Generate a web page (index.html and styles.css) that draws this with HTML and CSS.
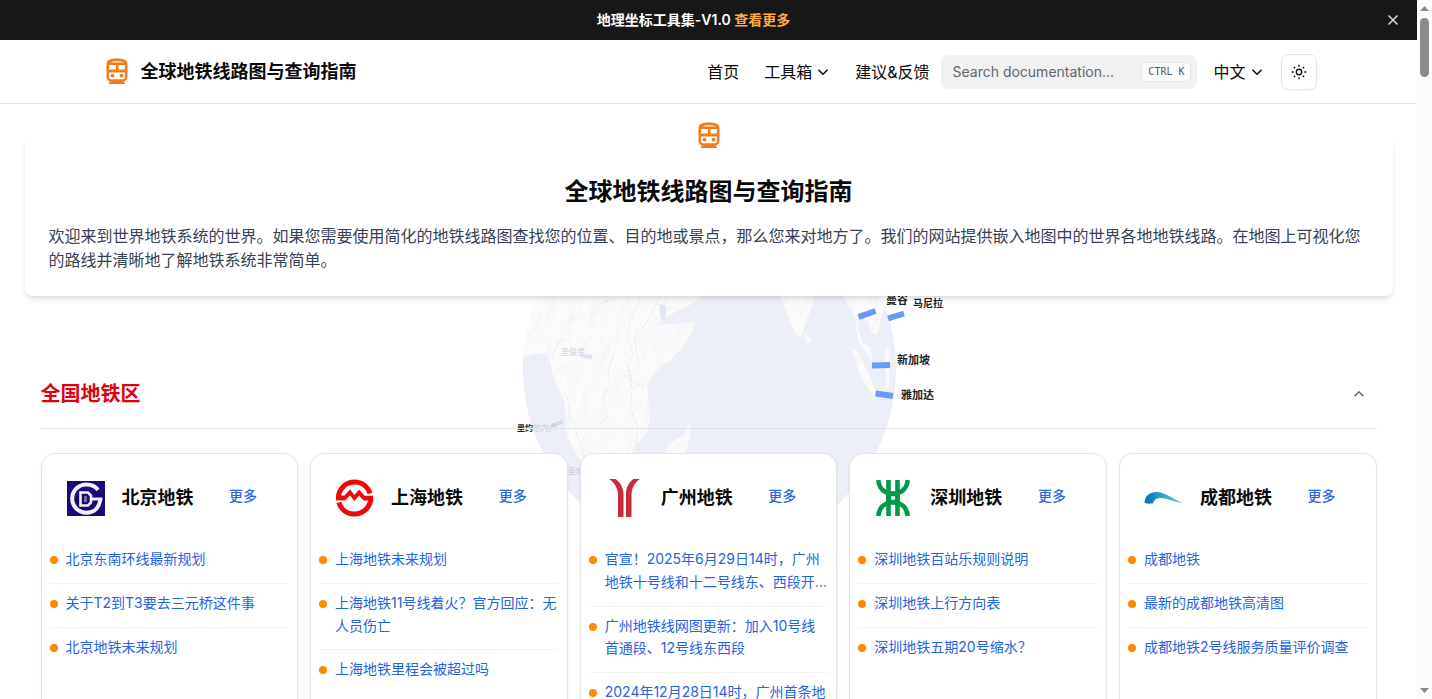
FILE: index.html
```html
<!DOCTYPE html>
<html lang="zh-CN">
<head>
<meta charset="utf-8">
<meta name="viewport" content="width=device-width, initial-scale=1">
<title>全球地铁线路图与查询指南</title>
<link rel="stylesheet" href="styles.css">
</head>
<body>
<svg class="defs" width="0" height="0" aria-hidden="true">
  <defs>
    <symbol id="subway" viewBox="0 0 32 32">
      <path fill="#f27a1e" fill-rule="evenodd" d="M5.500 8C5.500 4 9.500 2.500 16 2.500S26.500 4 26.500 8V20.500c0 2.800-1.700 4.700-4 5.200l1.500 1v1.300h-16V26.700l1.500-1c-2.300-.5-4-2.400-4-5.200zM8 9v4.600h7V9zm9.500 0v4.600H24V9zM8 16.500v4.200c0 1.700 1 2.600 2.700 2.600h10.600c1.700 0 2.700-.9 2.700-2.600V16.500z"/>
      <path fill="#ffd9b0" d="M9.500 6.700C10.500 5.500 12.500 5 16 5s5.500.5 6.500 1.700z"/>
      <circle cx="11.500" cy="19.700" r="1.900" fill="#f27a1e"/><circle cx="20.500" cy="19.700" r="1.900" fill="#f27a1e"/>
    </symbol>
    <symbol id="chevron" viewBox="0 0 14 14"><path d="M2.500 4.700 7 9.200l4.500-4.500" fill="none" stroke="currentColor" stroke-width="1.500"/></symbol>
  </defs>
</svg>
<div class="shell">
<div class="page">
  <div class="banner">
    <p class="banner-text">地理坐标工具集-V1.0 <a href="#tools">查看更多</a></p>
    <button class="banner-close" type="button" aria-label="关闭"><svg width="12" height="12" viewBox="0 0 12 12"><path d="M1.500 1.500l9 9m0-9l-9 9" stroke="currentColor" stroke-width="1.600"/></svg></button>
  </div>
  <header class="header">
    <div class="header-inner">
      <a class="brand" href="#home"><svg class="subway"><use href="#subway"/></svg><span>全球地铁线路图与查询指南</span></a>
      <nav class="nav">
        <a href="#home">首页</a>
        <button class="menu" type="button">工具箱<svg class="chevron"><use href="#chevron"/></svg></button>
        <a href="#feedback">建议&amp;反馈</a>
      </nav>
      <label class="search"><input type="search" aria-label="Search documentation" placeholder="Search documentation..."><kbd>CTRL K</kbd></label>
      <button class="menu lang" type="button">中文<svg class="chevron"><use href="#chevron"/></svg></button>
      <button class="theme" type="button" aria-label="主题"><svg width="16" height="16" viewBox="0 0 16 16" fill="none" stroke="currentColor" stroke-width="1.400"><circle cx="8" cy="8" r="2.700"/><path d="M8 .7v2M8 13.300v2M.7 8h2M13.300 8h2M2.900 2.900l1.300 1.300M11.800 11.800l1.300 1.300M2.900 13.100l1.300-1.300M11.800 4.200l1.300-1.300"/></svg></button>
    </div>
  </header>
  <main class="main">
    <svg class="globe" width="480" height="400" viewBox="468 160 480 400" aria-hidden="true">
      <defs>
        <clipPath id="ball"><circle cx="708.500" cy="369" r="186.500"/></clipPath>
        <filter id="relief" x="0" y="0" width="100%" height="100%">
          <feTurbulence type="fractalNoise" baseFrequency=".07 .05" numOctaves="4" seed="8"/>
          <feDiffuseLighting surfaceScale="2.200" lighting-color="#fff" result="light"><feDistantLight azimuth="225" elevation="62"/></feDiffuseLighting>
          <feColorMatrix type="matrix" values=".2 0 0 0 .78  .2 0 0 0 .78  .2 0 0 0 .79  0 0 0 1 0"/>
          <feComposite in2="SourceGraphic" operator="in"/>
        </filter>
        <linearGradient id="fade" x1="0" y1="0" x2="1" y2="1"><stop offset=".8" stop-color="#fff" stop-opacity="0"/><stop offset=".88" stop-color="#fff"/></linearGradient>
      </defs>
      <g clip-path="url(#ball)">
        <rect x="520" y="180" width="376" height="380" fill="#eceff7"/>
        <g fill="#f8f9fb" filter="url(#relief)">
          <path d="M520 180h170l10 116-9 8-27 13-8 8 38-3c-3 14-12 26-24 37-10 8-19 16-24 28l3 30-2 14-12 14-10 20-32 14-20-28c-4-11-8-15-8-25l-1-23c-5-14-13-24-14-38l-3-9-10-3-15 4z"/>
          <path d="M688 423l-5 13-9 4-8 6-4 16 6 16h8l6-18 7-22 1-9z"/>
          <path d="M776 290l6 13 8 22 6 10 4 2 6-18 5-13 4-16zM803 334l8 5-1 5-5-1zM838 290h40l6 14-8 30-5-1-5-12-9-8v18l5 12 8 5 1 14-8-12-6-9-3-24-9-16zM850 348l8 5 9 20 10 22-3 3-13-18zM884 348h5l-1 38-3 2z"/>
        </g>
        <g fill="none" stroke="#c6ccd6" stroke-width="1" opacity=".4">
          <path stroke-dasharray="3 1.500" d="M645 285l-8 18-8 16-2 17 5 18-5 14 4 13 11 6M613 354l-6 17 2 13-7 16 4 16-11 14M628 370l3 19-2 20 8 18-2 15 6 14M660 295l-14 27-13 14 4 24M551 357l5-12 8-6M566 397l3 20 9 22 5 16 18 9M592 315l9-12 13-5"/>
        </g>
        <path d="M658 304l7 2-1 15-4-2z" fill="#e0e6f2"/>
        <rect x="708" y="369" width="190" height="190" fill="url(#fade)"/>
      </g>
      <g stroke="#6c98fb" stroke-width="6">
        <path d="M857.500 317l17-6M887 318.500l16-5M871 365.500l18-.5M874.500 393.500l17.500 2.500"/>
        <path d="M580 355.500l11 1.500M550 426l12-4.500" opacity=".22" stroke-width="4"/>
      </g>
      <g class="city">
        <text x="885" y="304">曼谷</text><text x="912" y="307" class="mid">马尼拉</text><text x="896" y="364">新加坡</text><text x="900" y="399">雅加达</text>
        <text x="516" y="431" class="tiny">里约</text><text x="532" y="431" class="tiny faint">热内卢</text><text x="560" y="355" class="tiny faint">圣保罗</text><text x="567" y="474" class="tiny faint">圣地亚哥</text>
      </g>
    </svg>
    <section class="hero">
      <svg class="subway"><use href="#subway"/></svg>
      <div class="hero-card">
        <h1>全球地铁线路图与查询指南</h1>
        <p>欢迎来到世界地铁系统的世界。如果您需要使用简化的地铁线路图查找您的位置、目的地或景点，那么您来对地方了。我们的网站提供嵌入地图中的世界各地地铁线路。在地图上可视化您的路线并清晰地了解地铁系统非常简单。</p>
      </div>
    </section>
    <section class="region">
      <button class="region-head" type="button" aria-expanded="true"><span>全国地铁区</span><svg width="14" height="14" viewBox="0 0 14 14"><path d="M2.500 9.300 7 4.800l4.500 4.500" fill="none" stroke="#555" stroke-width="1.300"/></svg></button>
      <div class="cards">
        <article class="card">
          <div class="card-head">
            <svg class="logo" viewBox="0 0 40 40"><path fill="#1c0878" d="M1 3h38v35H1z"/><path d="M32 12C29.500 8.500 25.500 6.500 20.500 6.500 12.500 6.500 6.200 12.500 6.200 20.500S12.500 34.700 20.500 34.700c7 0 12.500-4.500 13.800-12.700" fill="none" stroke="#f4f2ff" stroke-width="4"/><path fill="#f4f2ff" d="M24 19.500h12.500v3H24z"/><path d="M14.500 14.500H22l3 3v7l-3 3h-7.500z" fill="none" stroke="#f4f2ff" stroke-width="2.600"/><path d="M18 18h3v6h-3z" fill="#f4f2ff" opacity=".4"/></svg>
            <h2>北京地铁</h2><a class="more" href="#beijing">更多</a>
          </div>
          <ul><li><a href="#b1">北京东南环线最新规划</a></li><li><a href="#b2">关于T2到T3要去三元桥这件事</a></li><li><a href="#b3">北京地铁未来规划</a></li></ul>
        </article>
        <article class="card">
          <div class="card-head">
            <svg class="logo" viewBox="0 0 40 40"><g fill="none" stroke="#f00808" stroke-width="5"><path d="M3.300 19.500C4 10.500 11 4 19.500 4c7.500 0 13.200 4.500 15.600 11.500"/><path d="M35.900 20.500C35.200 29.500 28 36 19.500 36 12 36 6 31.500 3.900 24.500"/></g><path fill="#f00808" d="M1 17.500h8.500l5.500-6 4.500 5.500 4.500-5.500 5.500 6H38v5H28.500l-4.500-5-4.500 5.500-4.500-5.500-5 5H1z"/><path d="M0 23.300H10.500M39 16.800H29.500" stroke="#fff" stroke-width="1.200" fill="none"/></svg>
            <h2>上海地铁</h2><a class="more" href="#shanghai">更多</a>
          </div>
          <ul><li><a href="#s1">上海地铁未来规划</a></li><li><a href="#s2">上海地铁11号线着火？官方回应：无人员伤亡</a></li><li><a href="#s3">上海地铁里程会被超过吗</a></li></ul>
        </article>
        <article class="card">
          <div class="card-head">
            <svg class="logo" viewBox="0 0 40 40"><path fill="#c82a3e" d="M4 1h6.500C16 5 18.500 10 18.500 17v22H13V18C13 10.500 10 5 4 1zM35 1h-6.500C23 5 21 10 21 17v22h5.500V18C26.500 10.500 29 5 35 1z"/></svg>
            <h2>广州地铁</h2><a class="more" href="#guangzhou">更多</a>
          </div>
          <ul><li><a href="#g1">官宣！2025年6月29日14时，广州地铁十号线和十二号线东、西段开通初期运营</a></li><li><a href="#g2">广州地铁线网图更新：加入10号线首通段、12号线东西段</a></li><li><a href="#g3">2024年12月28日14时，广州首条地铁</a></li></ul>
        </article>
        <article class="card">
          <div class="card-head">
            <svg class="logo" viewBox="0 0 40 40"><g fill="none" stroke="#009a4a" stroke-width="4.600"><path d="M4.300 2C5 10 10 15.500 19 15.500S33 10 33.700 2M4.300 38C5 30 10 24.500 19 24.500S33 30 33.700 38"/><path d="M14.500 2v36M23.500 2v36"/></g><path fill="#009a4a" d="M12 14h14v12H12z"/><path fill="#fff" d="M17.200 18.200h3.600v3.600h-3.600z"/></svg>
            <h2>深圳地铁</h2><a class="more" href="#shenzhen">更多</a>
          </div>
          <ul><li><a href="#z1">深圳地铁百站乐规则说明</a></li><li><a href="#z2">深圳地铁上行方向表</a></li><li><a href="#z3">深圳地铁五期20号缩水？</a></li></ul>
        </article>
        <article class="card">
          <div class="card-head">
            <svg class="logo" viewBox="0 0 40 40"><defs><linearGradient id="wing"><stop offset=".1" stop-color="#0877bb"/><stop offset=".5" stop-color="#38a9cf"/><stop offset="1" stop-color="#75c6df"/></linearGradient></defs><path fill="url(#wing)" d="M.5 24.500C1 17 7 13.500 13.500 14c8 .7 16 7 25 11.300-9-2-16.500-5.300-22-5.300-4 0-6.500 1.800-7.500 5.500-3.500 0-6 .7-8.500-1z"/></svg>
            <h2>成都地铁</h2><a class="more" href="#chengdu">更多</a>
          </div>
          <ul><li><a href="#c1">成都地铁</a></li><li><a href="#c2">最新的成都地铁高清图</a></li><li><a href="#c3">成都地铁2号线服务质量评价调查</a></li></ul>
        </article>
      </div>
    </section>
  </main>
</div>
<div class="rail" aria-hidden="true">
  <svg width="9" height="5" viewBox="0 0 9 5"><path d="M0 5 4.500 0 9 5z" fill="#8b8b8b"/></svg>
  <div class="thumb"></div>
  <svg class="down" width="9" height="5" viewBox="0 0 9 5"><path d="M0 0h9L4.500 5z" fill="#8b8b8b"/></svg>
</div>
</div>
</body>
</html>
```
FILE: styles.css
```css
* { box-sizing: border-box; }
body, h1, h2, p, ul { margin: 0; padding: 0; }
body {
  font-family: Inter, "Noto Sans CJK SC", sans-serif;
  font-size: 16px;
  line-height: 24px;
  color: #0a0a0a;
  background: #fff;
}
a { color: inherit; text-decoration: none; }
button {
  font: inherit;
  color: inherit;
  background: none;
  border: 0;
  padding: 0;
  cursor: pointer;
}
svg { flex: none; }
.defs { position: absolute; }

.shell { display: flex; height: 100vh; overflow: hidden; }
.page { flex: 1; min-width: 0; }

.banner {
  display: flex;
  align-items: center;
  height: 40px;
  padding-right: 18px;
  background: #171717;
  color: #fff;
}
.banner-text {
  flex: 1;
  text-align: center;
  font-size: 14px;
  line-height: 20px;
  font-weight: 600;
}
.banner-text a { color: #ffab40; }
.banner-close { display: flex; color: #d4d4d4; }

.header { border-bottom: 1px solid #e5e5e5; }
.header-inner {
  display: flex;
  align-items: center;
  max-width: 1280px;
  height: 63px;
  margin: 0 auto;
  padding: 0 32px;
}
.subway { width: 32px; height: 32px; }
.brand {
  display: flex;
  align-items: center;
  gap: 8px;
  margin-right: auto;
  font-size: 18px;
  font-weight: 600;
}
.nav { display: flex; align-items: center; gap: 25px; }
.menu { display: flex; align-items: center; gap: 4px; }
.chevron { width: 14px; height: 14px; }
.search {
  display: flex;
  align-items: center;
  width: 256px;
  height: 34px;
  margin: 0 16px 0 12px;
  padding: 0 6px 0 11px;
  border-radius: 8px;
  background: #f1f1f1;
}
.search input {
  flex: 1;
  min-width: 0;
  padding: 0;
  border: 0;
  outline: 0;
  background: none;
  font: inherit;
  font-size: 14px;
}
.search input::placeholder { color: #5f6672; opacity: 1; }
.search kbd {
  padding: 0 6px;
  border: 1px solid #e5e5e5;
  border-radius: 4px;
  background: #fcfcfc;
  color: #555b66;
  font: 10px/18px "DejaVu Sans Mono", monospace;
  white-space: pre;
}
.lang { margin-right: 17px; }
.theme {
  display: flex;
  align-items: center;
  justify-content: center;
  width: 36px;
  height: 36px;
  border: 1px solid #e5e5e5;
  border-radius: 8px;
  box-shadow: 0 1px 2px rgb(0 0 0 / 5%);
}

.main { position: relative; padding: 16px 24px 48px; }
.globe {
  position: absolute;
  top: 56px;
  left: 50%;
  margin-left: -240px;
}
.city { font-family: "Noto Sans CJK SC", sans-serif; font-size: 11px; font-weight: 700; fill: #222; }
.mid { font-size: 10px; }
.tiny { font-size: 8px; }
.faint { fill: #a3abb8; opacity: .4; }

.hero {
  position: relative;
  display: flex;
  flex-direction: column;
  align-items: center;
  max-width: 1368px;
  margin: 0 auto;
}
.hero > .subway { position: relative; z-index: 1; }
.hero-card {
  width: 100%;
  margin-top: -16px;
  padding: 40px 24px 24px;
  border-radius: 8px;
  background: #fff;
  box-shadow: 0 4px 6px -1px rgb(0 0 0 / 10%), 0 2px 4px -2px rgb(0 0 0 / 10%);
}
.hero h1 {
  margin-bottom: 16px;
  text-align: center;
  font-size: 24px;
  line-height: 32px;
  font-weight: 600;
}
.hero p { color: #364153; }

.region {
  position: relative;
  max-width: 1336px;
  margin: 64px auto 0;
}
.region-head {
  display: flex;
  align-items: center;
  justify-content: space-between;
  width: 100%;
  padding: 20px 11px 20px 0;
  border-bottom: 1px solid #e0e3e7;
  color: #e0000f;
  font-size: 20px;
  line-height: 28px;
  font-weight: 600;
}
.cards {
  display: grid;
  grid-template-columns: repeat(5, 1fr);
  gap: 12px;
  margin-top: 24px;
}
.card {
  min-width: 0;
  padding: 0 8px 24px;
  border: 1px solid #e5e5e5;
  border-radius: 14px;
  background: #fff;
  box-shadow: 0 1px 3px rgb(0 0 0 / 8%);
}
.card-head {
  display: flex;
  align-items: center;
  gap: 16px;
  padding: 24px 32px 22px 16px;
}
.logo { width: 40px; height: 40px; }
.card h2 {
  margin-right: auto;
  font-size: 18px;
  line-height: 28px;
  font-weight: 600;
}
.more {
  padding-bottom: 4px;
  color: #2b66e0;
  font-size: 14px;
  font-weight: 500;
}
.card ul { list-style: none; }
.card li {
  display: flex;
  gap: 8px;
  padding: 8px 0 12px;
  border-bottom: 1px solid #f3f4f6;
  font-size: 14px;
  line-height: 1.625;
}
.card li:last-child { border-bottom: 0; }
.card li::before {
  content: "";
  flex: none;
  width: 8px;
  height: 8px;
  margin-top: 8px;
  border-radius: 50%;
  background: #ff8904;
}
.card li a {
  display: -webkit-box;
  -webkit-box-orient: vertical;
  -webkit-line-clamp: 2;
  align-self: flex-start;
  overflow: hidden;
  color: #2563df;
}

.rail {
  display: flex;
  flex-direction: column;
  align-items: center;
  width: 15px;
  padding: 6px 0;
  background: #fcfcfc;
}
.thumb {
  width: 9px;
  height: 59px;
  margin-top: 7px;
  border-radius: 5px;
  background: #8b8b8b;
}
.down { margin-top: auto; }
```
